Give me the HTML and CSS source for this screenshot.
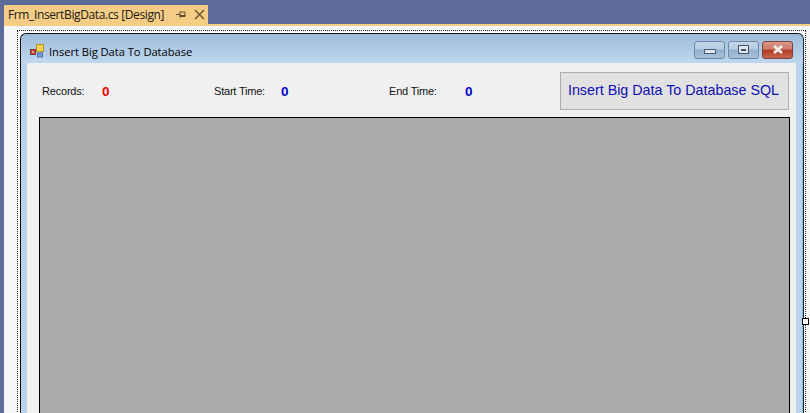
FILE: index.html
```html
<!DOCTYPE html>
<html lang="en">
<head>
<meta charset="utf-8">
<title>Frm_InsertBigData.cs [Design]</title>
<link rel="stylesheet" href="styles.css">
</head>
<body>
<div class="tabbar">
  <div class="tab">
    <span class="tab-title">Frm_InsertBigData.cs [Design]</span>
    <svg class="pin" width="11" height="9" viewBox="0 0 11 9"><path d="M0 4.5H4M4 1.5V7.5M4 2H9V6.5H4M4 5.5H9" fill="none" stroke="#5c4a26" stroke-width="1"/></svg>
    <svg class="close" width="11" height="11" viewBox="0 0 11 11"><path d="M1 1L10 10M10 1L1 10" fill="none" stroke="#6f5a30" stroke-width="1.6"/></svg>
  </div>
</div>
<div class="accent"></div>
<main class="designer">
  <div class="selection">
    <div class="window">
      <div class="titlebar">
        <svg class="app-icon" width="16" height="16" viewBox="0 0 16 16">
          <rect x="1.5" y="6.5" width="5" height="5" fill="#c8453c" stroke="#7a3a3a"/>
          <rect x="3.2" y="8.2" width="1.6" height="1.6" fill="#f4d0c0"/>
          <rect x="7.5" y="1.5" width="7" height="7" fill="#f6d44e" stroke="#b09030"/>
          <rect x="8.5" y="10" width="5" height="4" fill="#6f9fd8" stroke="#54779f"/>
        </svg>
        <span class="window-title">Insert Big Data To Database</span>
        <div class="controls">
          <div class="ctl"><span class="glyph-min"></span></div>
          <div class="ctl"><span class="glyph-max"></span></div>
          <div class="ctl ctl-close">
            <svg width="18" height="11" viewBox="0 0 18 11"><path d="M5 2L13 9M13 2L5 9" fill="none" stroke="#f3efe9" stroke-width="2.8"/></svg>
          </div>
        </div>
      </div>
      <div class="frame">
        <div class="client">
          <div class="toolbar">
            <div class="stat stat-records"><span class="label">Records:</span><b class="value red">0</b></div>
            <div class="stat stat-start"><span class="label">Start Time:</span><b class="value blue">0</b></div>
            <div class="stat stat-end"><span class="label">End Time:</span><b class="value blue">0</b></div>
            <button class="action" type="button">Insert Big Data To Database SQL</button>
          </div>
          <div class="grid"></div>
        </div>
      </div>
    </div>
    <span class="handle"></span>
  </div>
</main>
</body>
</html>
```
FILE: styles.css
```css
* { box-sizing: border-box; }
html, body { margin: 0; height: 100%; overflow: hidden; }
body {
  width: 810px;
  height: 413px;
  display: flex;
  flex-direction: column;
  background: #5d6b99;
  font-family: "Liberation Sans", Arial, sans-serif;
}
.tabbar {
  height: 24px;
  padding: 5px 0 0 4px;
  display: flex;
  flex: none;
}
.tab {
  width: 204px;
  height: 19px;
  background: #f5cc84;
  display: flex;
  align-items: center;
  padding-left: 4px;
  color: #1a1a1a;
}
.tab-title { font-family: "Open Sans", sans-serif; font-size: 12px; width: 165px; white-space: nowrap; letter-spacing: -0.38px; }
.pin { margin-left: 3px; }
.close { margin-left: 7px; }
.accent { height: 2px; margin-left: 4px; background: #f5cc84; flex: none; }
.designer {
  flex: 1;
  margin-left: 4px;
  background: #f6f6f6;
  padding: 4px 4px 0 13px;
  overflow: hidden;
}
.selection {
  position: relative;
  height: 400px;
  border: 1px dotted #222;
  border-bottom: 0;
  padding: 2px 1px 0 2px;
  background: #fff;
}
.window {
  height: 400px;
  border: 1px solid #111;
  border-bottom: 0;
  border-radius: 6px 6px 0 0;
  border-right-color: #1d2b3a;
  background: linear-gradient(#9ebcdb 0, #b5cfe8 20px, #c0d7ed 30px);
  display: flex;
  flex-direction: column;
}
.titlebar {
  height: 29px;
  display: flex;
  align-items: center;
  padding: 6px 10px 0 8px;
  flex: none;
}
.app-icon { margin-right: 4px; margin-top: -1px; }
.window-title { font-family: "Open Sans", sans-serif; font-size: 11.2px; color: #000; flex: 1; letter-spacing: -0.05px; margin-top: -1px; }
.controls { display: flex; gap: 3px; margin-top: -4px; }
.ctl {
  width: 31px;
  height: 18px;
  border: 1px solid #6d88a6;
  border-radius: 3px;
  background: linear-gradient(#c5d6e8 0, #b5cbe2 45%, #93aecb 50%, #a9c2dc 100%);
  display: flex;
  align-items: center;
  justify-content: center;
}
.ctl-close {
  border-color: #7a4238;
  background: linear-gradient(#d9998b 0, #cc7866 45%, #b23a24 52%, #c8664f 100%);
}
.glyph-min { width: 12px; height: 5px; margin-top: 3px; background: #e4e8ee; border: 1px solid #4a5d75; }
.glyph-max { width: 11px; height: 9px; border: 1px solid #42546b; background: #dde5ee; display: flex; align-items: center; justify-content: center; }
.glyph-max::after { content: ""; width: 5px; height: 2px; background: #42546b; }
.frame {
  flex: 1;
  padding: 0 7px 0 6px;
  background: #b9d3ec;
  box-shadow: inset -1px 0 0 #86bede;
}
.client { height: 100%; background: #f0f0f0; padding: 0 6px 0 12px; }
.toolbar { height: 54px; display: flex; align-items: center; }
.stat { display: flex; align-items: center; font-size: 11px; color: #111; padding-top: 2px; }
.label { display: block; letter-spacing: -0.2px; }
.value { font-size: 13.5px; font-weight: bold; }
.red { color: #f00000; }
.blue { color: #0000c8; }
.stat-records { width: 175px; padding-left: 3px; }
.stat-records .label { width: 60px; }
.stat-start { width: 175px; }
.stat-start .label { width: 67px; }
.stat-end { width: 171px; }
.stat-end .label { width: 76px; }
.action {
  width: 229px;
  height: 38px;
  margin-top: 1px;
  background: #e1e1e1;
  border: 1px solid #adadad;
  font-family: "Liberation Sans", sans-serif;
  font-size: 14.3px;
  color: #0f0fb4;
  padding: 0 2px 2px 0;
  white-space: nowrap;
}
.grid { height: 320px; background: #ababab; border: 1px solid #000; border-bottom: 0; }
.handle {
  position: absolute;
  right: -4px;
  top: 287px;
  width: 7px;
  height: 7px;
  background: #fff;
  border: 1px solid #000;
}
```
